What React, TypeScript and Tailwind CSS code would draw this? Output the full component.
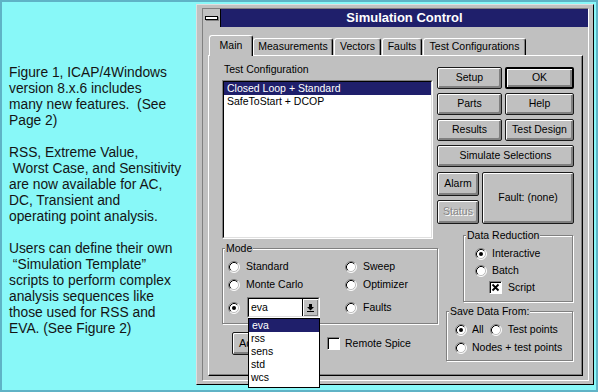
import React from "react";

const lines = [
  "Figure 1, ICAP/4Windows",
  "version 8.x.6 includes",
  "many new features.  (See",
  "Page 2)",
  "",
  "RSS, Extreme Value,",
  " Worst Case, and Sensitivity",
  "are now available for AC,",
  "DC, Transient and",
  "operating point analysis.",
  "",
  "Users can define their own",
  " \u201cSimulation Template\u201d",
  "scripts to perform complex",
  "analysis sequences like",
  "those used for RSS and",
  "EVA. (See Figure 2)",
];

function Radio({ on }: { on?: boolean }) {
  return (
    <svg width="12" height="12" viewBox="0 0 12 12" className="shrink-0">
      <circle cx="6" cy="6" r="5" fill="#fff" />
      <path d="M9.89 2.11A5.5 5.5 0 0 0 2.11 9.89" fill="none" stroke="#808080" />
      <path d="M2.11 9.89A5.5 5.5 0 0 0 9.89 2.11" fill="none" stroke="#fff" />
      <path d="M9.18 2.82A4.5 4.5 0 0 0 2.82 9.18" fill="none" stroke="#000" />
      <path d="M2.82 9.18A4.5 4.5 0 0 0 9.18 2.82" fill="none" stroke="#c0c0c0" />
      {on && <circle cx="6" cy="6" r="2" fill="#000" />}
    </svg>
  );
}

function Check({ on }: { on?: boolean }) {
  return (
    <div className="w-[13px] h-[13px] shrink-0 bg-white border border-t-[#808080] border-l-[#808080] border-b-white border-r-white shadow-[inset_1px_1px_0_#000]">
      {on && (
        <svg width="11" height="11" viewBox="0 0 11 11">
          <path d="M2.5 2.5L8.5 8.5M8.5 2.5L2.5 8.5" stroke="#000" strokeWidth="1.8" />
        </svg>
      )}
    </div>
  );
}

function Btn({ children, className = "", def, disabled }: { children: React.ReactNode; className?: string; def?: boolean; disabled?: boolean }) {
  return (
    <div
      className={`flex items-center justify-center rounded-[2px] bg-[#c0c0c0] shadow-[inset_1px_1px_0_#fff,inset_-1px_-1px_0_#808080,inset_-2px_-2px_0_#808080] ${
        def ? "border-2 border-black" : "border border-[#1a1a1a]"
      } ${disabled ? "text-[#868686] [text-shadow:1px_1px_0_#fff]" : ""} ${className}`}
    >
      {children}
    </div>
  );
}

function Group({ label, className = "", children }: { label: string; className?: string; children: React.ReactNode }) {
  return (
    <div className={`relative border border-[#808080] shadow-[inset_1px_1px_0_#fff,1px_1px_0_#fff] ${className}`}>
      <span className="absolute top-[-7px] left-[2px] bg-[#c0c0c0] px-[1px] leading-[13px]">{label}</span>
      {children}
    </div>
  );
}

function Tab({ label, className = "", active }: { label: string; className?: string; active?: boolean }) {
  return (
    <div
      className={`flex items-center justify-center bg-[#c0c0c0] border-t border-l border-r border-t-white border-l-white border-r-black rounded-t-[3px] shadow-[inset_-1px_0_0_#808080] ${
        active ? "h-[21px] mb-[-1px] relative z-10" : "h-[17px]"
      } ${className}`}
    >
      {label}
    </div>
  );
}

export default function App() {
  return (
    <div className="w-[598px] h-[392px] border-2 border-[#5fb3c6] bg-[#88f8f8] flex overflow-hidden">
      {/* Caption text */}
      <div className="w-[194px] shrink-0 pl-[7px] pt-[63px] font-['Liberation_Sans',Arial,sans-serif] text-[13.8px] leading-[16px] text-[#141414]">
        {lines.map((l, i) => (
          <div key={i} className="whitespace-pre h-[16px]">
            {l}
          </div>
        ))}
      </div>

      {/* Dialog window */}
      <div className="mt-[2px] w-[398px] h-[381px] shrink-0 border border-t-[#dfdfdf] border-l-[#dfdfdf] border-r-black border-b-black bg-[#c0c0c0] pl-[5px] pt-[3px] pr-[4px] pb-[3px] font-['Liberation_Sans',Arial,sans-serif] text-[10.5px] text-black">
        <div className="h-full flex flex-col border border-t-[#808080] border-l-[#808080] border-r-white border-b-white">
          <div className="flex h-[18px] shrink-0">
            <div className="w-[18px] h-[18px] bg-[#c0c0c0] border-r border-black flex items-center justify-center">
              <div className="w-[13px] h-[4px] bg-white border border-black shadow-[1px_1px_0_#808080]" />
            </div>
            <div className="flex-1 bg-[#1f1f6b] text-white font-bold text-[13px] flex items-center justify-center">
              Simulation Control
            </div>
          </div>

          <div className="flex-1 flex flex-col px-[5px] pt-[8px] pb-[4px]">
            {/* Tabs */}
            <div className="flex items-end h-[20px] shrink-0">
              <Tab label="Main" active className="ml-[1px] w-[44px]" />
              <Tab label="Measurements" className="w-[80px]" />
              <Tab label="Vectors" className="ml-[1px] w-[47px]" />
              <Tab label="Faults" className="ml-[1px] w-[40px]" />
              <Tab label="Test Configurations" className="ml-[1px] w-[103px]" />
            </div>

            {/* Tab panel */}
            <div className="flex-1 flex border border-t-white border-l-white border-r-black border-b-black shadow-[inset_-1px_-1px_0_#808080] pl-[13px] pt-[7px]">
              {/* Left column */}
              <div className="w-[215px] shrink-0 flex flex-col">
                <div className="h-[13px] leading-[13px] pl-[2px]">Test Configuration</div>
                <div className="mt-[4px] w-[211px] h-[159px] border border-t-[#808080] border-l-[#808080] border-r-white border-b-white">
                  <div className="h-full bg-white border border-t-black border-l-black border-r-[#dfdfdf] border-b-[#dfdfdf]">
                    <div className="h-[13px] leading-[13px] bg-[#1f1f6b] text-white pl-[3px]">Closed Loop + Standard</div>
                    <div className="h-[13px] leading-[13px] pl-[3px]">SafeToStart + DCOP</div>
                  </div>
                </div>

                <Group label="Mode" className="mt-[9px] w-[216px] h-[76px] pl-[5px] pt-[9px]">
                  <div className="grid grid-cols-[117px_1fr]">
                    <div className="h-[18px] flex items-center gap-[6px]">
                      <Radio />
                      <span>Standard</span>
                    </div>
                    <div className="h-[18px] flex items-center gap-[6px]">
                      <Radio />
                      <span>Sweep</span>
                    </div>
                    <div className="h-[18px] flex items-center gap-[6px]">
                      <Radio />
                      <span>Monte Carlo</span>
                    </div>
                    <div className="h-[18px] flex items-center gap-[6px]">
                      <Radio />
                      <span>Optimizer</span>
                    </div>
                    <div className="mt-[3px] h-[21px] flex items-center">
                      <Radio on />
                      <div className="relative ml-[7px] w-[73px] h-[21px] border border-t-[#808080] border-l-[#808080] border-r-white border-b-white">
                        <div className="h-full flex bg-white border border-t-black border-l-black border-r-[#dfdfdf] border-b-[#dfdfdf]">
                          <div className="flex-1 pl-[2px] flex items-center">eva</div>
                          <div className="w-[16px] h-full bg-[#c0c0c0] border-l border-black shadow-[inset_1px_1px_0_#fff,inset_-1px_-1px_0_#808080] flex items-center justify-center">
                            <svg width="7" height="8" viewBox="0 0 7 8">
                              <rect x="2" y="0" width="3" height="3" fill="#000" />
                              <path d="M0 3H7L3.5 6.5Z" fill="#000" />
                              <rect x="0" y="7" width="7" height="1" fill="#000" />
                            </svg>
                          </div>
                        </div>
                        {/* open drop-down list */}
                        <div className="absolute z-20 left-0 top-[20px] w-[72px] h-[70px] bg-white border border-black">
                          <div className="h-[13px] leading-[13px] bg-[#1f1f6b] text-white pl-[3px]">eva</div>
                          <div className="h-[13px] leading-[13px] pl-[2px]">rss</div>
                          <div className="h-[13px] leading-[13px] pl-[2px]">sens</div>
                          <div className="h-[13px] leading-[13px] pl-[2px]">std</div>
                          <div className="h-[13px] leading-[13px] pl-[2px]">wcs</div>
                        </div>
                      </div>
                    </div>
                    <div className="mt-[3px] h-[21px] flex items-center gap-[6px]">
                      <Radio />
                      <span>Faults</span>
                    </div>
                  </div>
                </Group>

                <div className="mt-[8px] flex items-center">
                  <Btn className="ml-[10px] w-[62px] h-[23px] !justify-start pl-[6px] text-[11px]">Advanced...</Btn>
                  <div className="ml-[33px]">
                    <Check />
                  </div>
                  <span className="ml-[5px]">Remote Spice</span>
                </div>
              </div>

              {/* Right column */}
              <div className="w-[137px] shrink-0 flex flex-col mt-[4px]">
                <div className="flex flex-col gap-[4px]">
                  <div className="flex gap-[3px]">
                    <Btn className="w-[65px] h-[22px]">Setup</Btn>
                    <Btn def className="w-[69px] h-[22px]">OK</Btn>
                  </div>
                  <div className="flex gap-[3px]">
                    <Btn className="w-[65px] h-[22px]">Parts</Btn>
                    <Btn className="w-[69px] h-[22px]">Help</Btn>
                  </div>
                  <div className="flex gap-[3px]">
                    <Btn className="w-[65px] h-[22px]">Results</Btn>
                    <Btn className="w-[69px] h-[22px]">Test Design</Btn>
                  </div>
                  <Btn className="w-[137px] h-[22px]">Simulate Selections</Btn>
                </div>

                <div className="mt-[5px] flex gap-[3px]">
                  <div className="flex flex-col gap-[4px]">
                    <Btn className="w-[42px] h-[24px]">Alarm</Btn>
                    <Btn disabled className="w-[42px] h-[24px]">Status</Btn>
                  </div>
                  <Btn className="w-[92px] h-[52px]">Fault: (none)</Btn>
                </div>

                <Group label="Data Reduction" className="mt-[11px] ml-[26px] w-[110px] h-[67px] pl-[11px] pt-[9px]">
                  <div className="h-[17px] flex items-center gap-[5px]">
                    <Radio on />
                    <span>Interactive</span>
                  </div>
                  <div className="h-[17px] flex items-center gap-[5px]">
                    <Radio />
                    <span>Batch</span>
                  </div>
                  <div className="h-[17px] flex items-center gap-[6px] pl-[14px]">
                    <Check on />
                    <span>Script</span>
                  </div>
                </Group>

                <Group label="Save Data From:" className="mt-[9px] ml-[9px] w-[127px] h-[50px] pl-[8px] pt-[9px]">
                  <div className="h-[18px] flex items-center">
                    <Radio on />
                    <span className="ml-[5px]">All</span>
                    <div className="ml-[6px]">
                      <Radio />
                    </div>
                    <span className="ml-[6px]">Test points</span>
                  </div>
                  <div className="h-[17px] flex items-center gap-[5px]">
                    <Radio />
                    <span>Nodes + test points</span>
                  </div>
                </Group>
              </div>
            </div>
          </div>
        </div>
      </div>
    </div>
  );
}
